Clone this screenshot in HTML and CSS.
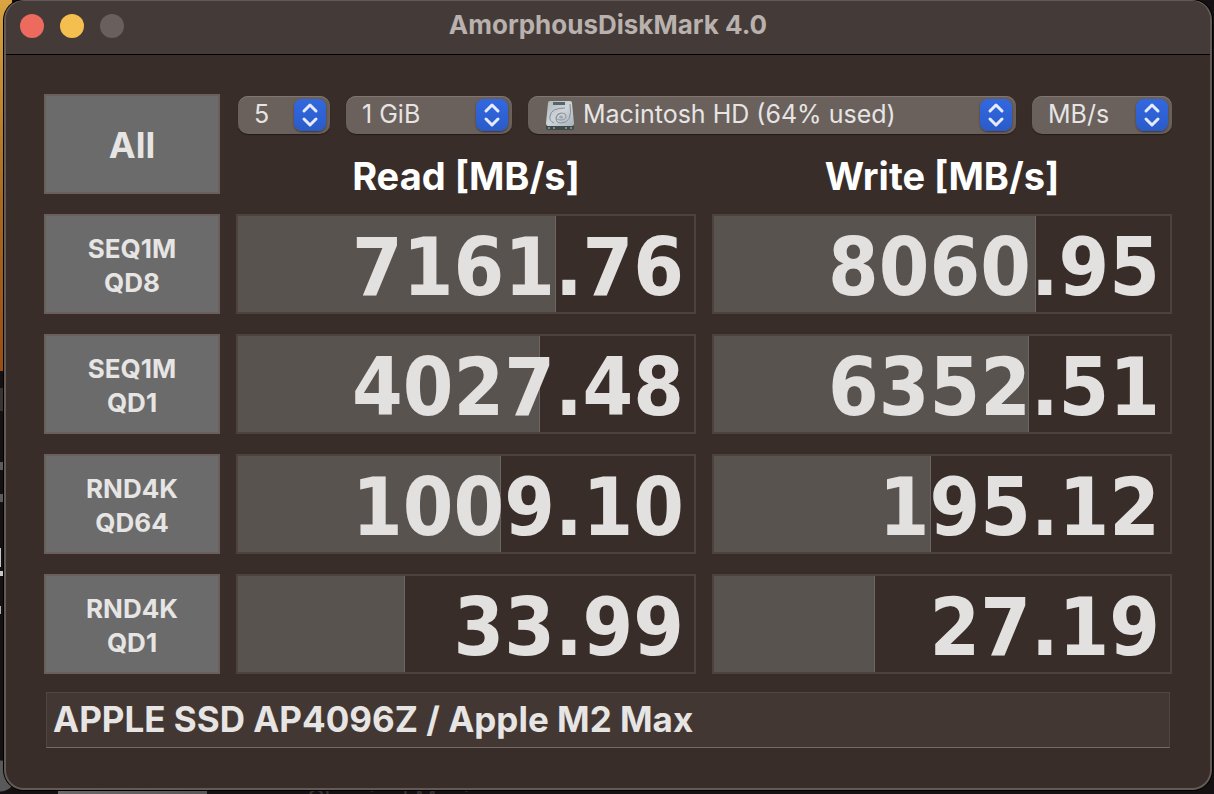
FILE: index.html
```html
<!DOCTYPE html>
<html lang="en">
<head>
    <meta charset="UTF-8" />
    <meta name="viewport" content="width=device-width, initial-scale=1.0"/>
    <title>AmorphousDiskMark 4.0</title>
    <link rel="stylesheet" href="styles.css">
</head>
<body>
    <div class="behind">Classical Music</div>

    <div class="window">
        <header class="titlebar">
            <div class="lights">
                <button class="light close" aria-label="Close"></button>
                <button class="light minimize" aria-label="Minimize"></button>
                <button class="light zoom" aria-label="Zoom" disabled></button>
            </div>
            <h1>AmorphousDiskMark 4.0</h1>
        </header>

        <main>
            <div class="board">
                <button class="test all">All</button>
                <div class="top">
                    <div class="controls">
                        <div class="popup count">
                            <select aria-label="Test count"><option>5</option></select>
                            <svg class="knob" viewBox="0 0 32 32"><path d="M10 12 16 6l6 6M10 20l6 6 6-6"/></svg>
                        </div>
                        <div class="popup size">
                            <select aria-label="Test size"><option>1 GiB</option></select>
                            <svg class="knob" viewBox="0 0 32 32"><path d="M10 12 16 6l6 6M10 20l6 6 6-6"/></svg>
                        </div>
                        <div class="popup volume">
                            <svg class="disk" viewBox="0 0 30 32">
                                <defs>
                                    <linearGradient id="top" x1="0" y1="0" x2="1" y2="1">
                                        <stop offset="0" stop-color="#aeb7bd"/>
                                        <stop offset=".5" stop-color="#ced5da"/>
                                        <stop offset="1" stop-color="#a9b3ba"/>
                                    </linearGradient>
                                </defs>
                                <path d="M1 25h28v4q0 2-2 2H3q-2 0-2-2z" fill="#414a4b"/>
                                <path d="M5 2h20q2 0 2 2l2 20q0 3-2 3H3q-2 0-2-3L3 4q0-2 2-2z" fill="url(#top)"/>
                                <path d="M8 3h12v3H8z" fill="#59636a"/>
                                <path d="M25 5q3 19-9 19-5 0-5-5 1-4 5-5M20 9Q6 9 5 17q-1 5 4 7" fill="none" stroke="#858f95"/>
                                <path d="M11 18q1-4 6-4 4 0 4 3 0 4-5 4-5 0-5-3z" fill="none" stroke="#8b959b"/>
                                <ellipse cx="16" cy="18" rx="2" ry="1.500" fill="#9ba5ab"/>
                                <path d="M4 28v2M9 28v2M21 28v2M26 28v2" stroke="#7d8888" stroke-width="2"/>
                            </svg>
                            <select aria-label="Volume"><option>Macintosh HD (64% used)</option></select>
                            <svg class="knob" viewBox="0 0 32 32"><path d="M10 12 16 6l6 6M10 20l6 6 6-6"/></svg>
                        </div>
                        <div class="popup unit">
                            <select aria-label="Unit"><option>MB/s</option></select>
                            <svg class="knob" viewBox="0 0 32 32"><path d="M10 12 16 6l6 6M10 20l6 6 6-6"/></svg>
                        </div>
                    </div>
                    <div class="heads">
                        <h2>Read [MB/s]</h2>
                        <h2>Write [MB/s]</h2>
                    </div>
                </div>

                <button class="test">SEQ1M<br>QD8</button>
                <div class="result"><div class="fill" style="width:69.8%"></div><span>7161.76</span></div>
                <div class="result"><div class="fill" style="width:70.7%"></div><span>8060.95</span></div>

                <button class="test">SEQ1M<br>QD1</button>
                <div class="result"><div class="fill" style="width:66.2%"></div><span>4027.48</span></div>
                <div class="result"><div class="fill" style="width:69.1%"></div><span>6352.51</span></div>

                <button class="test">RND4K<br>QD64</button>
                <div class="result"><div class="fill" style="width:57.7%"></div><span>1009.10</span></div>
                <div class="result"><div class="fill" style="width:47.5%"></div><span>195.12</span></div>

                <button class="test">RND4K<br>QD1</button>
                <div class="result"><div class="fill" style="width:36.6%"></div><span>33.99</span></div>
                <div class="result"><div class="fill" style="width:35.3%"></div><span>27.19</span></div>
            </div>

            <input class="device" type="text" aria-label="Device" value="APPLE SSD AP4096Z / Apple M2 Max">
        </main>
    </div>
</body>
</html>
```

FILE: styles.css
```css
* {
    margin: 0;
    padding: 0;
    box-sizing: border-box;
}
/* desktop showing round the window edges */
body {
    position: relative;
    min-height: 100vh;
    padding: 0 2px 4px 4px;
    font-family: Inter, "Liberation Sans", sans-serif;
    background:
        linear-gradient(#d9a441, #a86a20 200px, #9a4e14 370px) no-repeat 0 0 / 12px 371px,
        linear-gradient(#3a3431, #3a3431) no-repeat 0 388px / 3px 23px,
        linear-gradient(#5c5c5e, #5c5c5e) no-repeat 0 462px / 3px 8px,
        linear-gradient(#5c5c5e, #5c5c5e) no-repeat 0 494px / 3px 8px,
        linear-gradient(#c8c8c8, #c8c8c8) no-repeat 0 548px / 1px 19px,
        linear-gradient(#c8c8c8, #c8c8c8) no-repeat 0 571px / 3px 5px,
        linear-gradient(#b0b0b0, #b0b0b0) no-repeat 0 606px / 1px 8px,
        radial-gradient(circle at 0 776px, #5a595a 15px, transparent 16px),
        linear-gradient(90deg, #6b6968, #5a5857) no-repeat 58px 100% / 149px 4px,
        #151012;
}
/* list item of the app behind, only its top edge shows */
.behind {
    position: absolute;
    left: 307px;
    bottom: 0;
    height: 5px;
    overflow: hidden;
    font-size: 24px;
    line-height: 20px;
    color: #3b3334;
}
button, select, input {
    font: inherit;
    color: inherit;
    border: none;
    outline: none;
}
.window {
    position: relative;
    min-height: calc(100vh - 4px);
    border: 2px solid #645a55;
    border-top-width: 1px;
    border-radius: 20px;
    background: #392d29;
    box-shadow: 0 0 0 1px #000;
    overflow: hidden;
    color: #e6e5e4;
}

/* title bar */
.titlebar {
    height: 54px;
    display: grid;
    grid-template-columns: 1fr auto 1fr;
    align-items: center;
    padding: 0 14px 4px;
    background: #443b38;
    border-bottom: 1px solid #000;
}
.titlebar h1 {
    font-size: 26px;
    line-height: 32px;
    padding-bottom: 2px;
    color: #b9b1ae;
}
.lights {
    display: flex;
    gap: 16px;
}
.light {
    width: 24px;
    height: 24px;
    border-radius: 50%;
}
.close { background: #ed6a5e; }
.minimize { background: #f5bf4f; }
.zoom { background: #695f5c; }

/* benchmark grid */
main {
    padding: 39px 38px 40px;
}
.board {
    display: grid;
    grid-template-columns: 176px 1fr 1fr;
    grid-auto-rows: 100px;
    gap: 20px 16px;
}
.test {
    padding-top: 4px;
    border: 2px solid #6a5f5a;
    background: #6b6b6b;
    font-size: 26px;
    font-weight: 700;
    line-height: 34px;
}
.all {
    padding-top: 2px;
    font-size: 36px;
}
.top {
    grid-column: span 2;
}
.controls {
    display: flex;
    gap: 16px;
    padding: 2px 0 0 2px;
}
.popup {
    position: relative;
    display: flex;
    align-items: center;
    height: 38px;
    border-radius: 10px;
    background: #6a605c;
    box-shadow: inset 0 1px #80756f, 0 1px 1px #241b18;
}
.popup select {
    flex: 1;
    width: 100%;
    height: 38px;
    padding: 0 40px 2px 16px;
    appearance: none;
    background: none;
    font-size: 25px;
}
.count { width: 92px; }
.size { width: 166px; }
.volume { flex: 1; }
.unit { width: 140px; }
.volume select {
    padding-left: 8px;
}
.disk {
    width: 30px;
    height: 32px;
    margin-left: 17px;
}
.knob {
    position: absolute;
    right: 4px;
    top: 3px;
    width: 32px;
    height: 32px;
    border-radius: 8px;
    background: linear-gradient(#3268e0, #2a5bc8);
    box-shadow: 0 1px 2px #3e3633;
    pointer-events: none;
}
.knob path {
    fill: none;
    stroke: #e6ebf8;
    stroke-width: 3;
    stroke-linecap: round;
    stroke-linejoin: round;
}
.heads {
    display: grid;
    grid-template-columns: 1fr 1fr;
    gap: 16px;
    padding-top: 18px;
    text-align: center;
    color: #fff;
}
.heads h2 {
    font-size: 38px;
    line-height: 48px;
}

/* result cells, the fill sits under the number */
.result {
    display: grid;
    align-items: center;
    border: 2px solid #4d423e;
}
.fill, .result span {
    grid-area: 1 / 1;
}
.fill {
    height: 100%;
    background: #59534f;
    border-right: 1px solid #6a6560;
}
.result span {
    z-index: 1;
    padding: 6px 10px 0 0;
    text-align: right;
    font-family: "DejaVu Sans Condensed", "DejaVu Sans", sans-serif;
    font-size: 81px;
    font-weight: 700;
    line-height: 88px;
    color: #e2e1e0;
}

.device {
    display: block;
    width: calc(100% - 4px);
    height: 56px;
    margin: 18px 2px 0;
    padding: 0 6px 2px;
    border: 1px solid #50453f;
    border-bottom-color: #766b66;
    background: #433733;
    font-size: 35px;
    font-weight: 700;
}
```
